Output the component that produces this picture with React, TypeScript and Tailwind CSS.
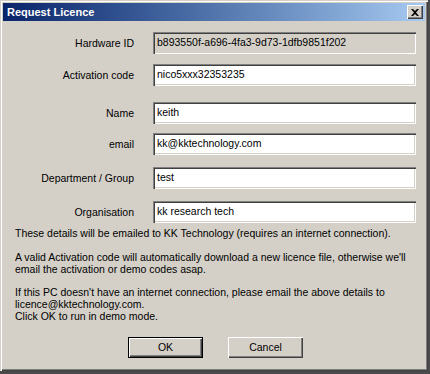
const font = { fontFamily: '"Liberation Sans", Arial, sans-serif' };

const Field = ({
  label,
  value,
  disabled,
  className,
}: {
  label: string;
  value: string;
  disabled?: boolean;
  className?: string;
}) => (
  <div className={`flex items-center ${className ?? ""}`}>
    <span className="w-[131px] text-right text-[10.5px] leading-[12px] text-black">{label}</span>
    <div
      className={`ml-[19px] flex h-[22px] w-[263px] items-center pl-[4px] text-[10.5px] text-black shadow-[inset_1px_1px_#808080,inset_2px_2px_#404040,inset_-1px_-1px_#ffffff,inset_-2px_-2px_#d4d0c8] ${
        disabled ? "bg-[#d4d0c8]" : "bg-white"
      }`}
    >
      {value}
    </div>
  </div>
);

const Button = ({ label, isDefault }: { label: string; isDefault?: boolean }) => (
  <button
    className={`flex h-[21px] w-[75px] items-center justify-center bg-[#d4d0c8] text-[10.5px] text-black ${
      isDefault
        ? "border border-black shadow-[inset_1px_1px_#ffffff,inset_-1px_-1px_#404040,inset_-2px_-2px_#808080]"
        : "shadow-[inset_1px_1px_#ffffff,inset_-1px_-1px_#404040,inset_-2px_-2px_#808080]"
    }`}
  >
    {label}
  </button>
);

export default function App() {
  return (
    <div className="h-[374px] w-[430px] overflow-hidden bg-[#4a4a4a]" style={font}>
      <div className="flex h-[371px] w-[428px] flex-col bg-[#d4d0c8] p-[3px] shadow-[inset_1px_1px_#d4d0c8,inset_2px_2px_#ffffff,inset_-1px_-1px_#404040,inset_-2px_-2px_#808080]">
        {/* title bar */}
        <div className="flex h-[18px] items-center justify-between bg-linear-to-r from-[#0a246a] to-[#a6caf0] pl-[4px] pr-[2px]">
          <span className="text-[11px] font-bold text-white">Request Licence</span>
          <div className="flex h-[14px] w-[16px] items-center justify-center bg-[#d4d0c8] shadow-[inset_1px_1px_#ffffff,inset_-1px_-1px_#404040,inset_-2px_-2px_#808080]">
            <svg width="8" height="7" viewBox="0 0 8 7">
              <path d="M0 0h2l2 2 2-2h2L5 3.5 8 7H6L4 5 2 7H0l3-3.5z" fill="#000" />
            </svg>
          </div>
        </div>

        <div className="flex flex-col">
          <Field className="mt-[11px]" label="Hardware ID" value="b893550f-a696-4fa3-9d73-1dfb9851f202" disabled />
          <Field className="mt-[10px]" label="Activation code" value="nico5xxx32353235" />
          <Field className="mt-[16px]" label="Name" value="keith" />
          <Field className="mt-[9px]" label="email" value="kk@kktechnology.com" />
          <Field className="mt-[12px]" label="Department / Group" value="test" />
          <Field className="mt-[12px]" label="Organisation" value="kk research tech" />
        </div>

        <div className="pl-[12px] text-[10.5px] leading-[12px] whitespace-nowrap text-black">
          <p className="mt-[4px]">These details will be emailed to KK Technology (requires an internet connection).</p>
          <p className="mt-[12px]">
            A valid Activation code will automatically download a new licence file, otherwise we'll
            <br />
            email the activation or demo codes asap.
          </p>
          <p className="mt-[11px]">
            If this PC doesn't have an internet connection, please email the above details to
            <br />
            licence@kktechnology.com.
            <br />
            Click OK to run in demo mode.
          </p>
        </div>

        <div className="mt-[15px] flex gap-[25px] pl-[125px]">
          <Button label="OK" isDefault />
          <Button label="Cancel" />
        </div>
      </div>
    </div>
  );
}
